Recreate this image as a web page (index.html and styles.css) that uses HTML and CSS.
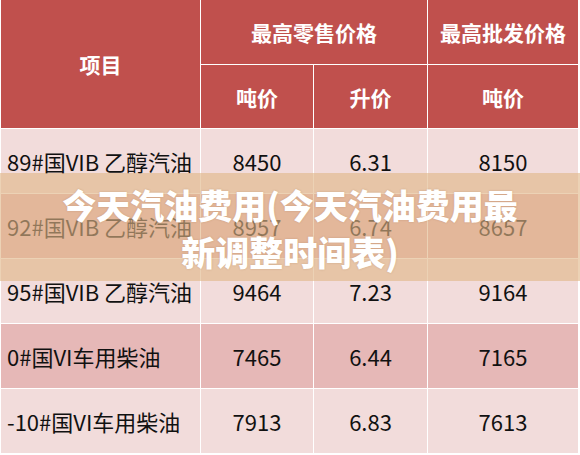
FILE: index.html
```html
<!DOCTYPE html>
<html lang="zh-CN">
<head>
<meta charset="utf-8">
<title>今天汽油费用</title>
<link rel="stylesheet" href="styles.css">
</head>
<body>
<div class="page">
  <div class="grid">
    <div class="hd span-rows">项目</div>
    <div class="hd span-cols">最高零售价格</div>
    <div class="hd span-rows-last">最高批发价格</div>
    <div class="hd">吨价</div>
    <div class="hd">升价</div>
    <div class="hd">吨价</div>

    <div class="cell name light">89#国VIB 乙醇汽油</div>
    <div class="cell light">8450</div>
    <div class="cell light">6.31</div>
    <div class="cell light">8150</div>

    <div class="cell name dark">92#国VIB 乙醇汽油</div>
    <div class="cell dark">8957</div>
    <div class="cell dark">6.74</div>
    <div class="cell dark">8657</div>

    <div class="cell name light">95#国VIB 乙醇汽油</div>
    <div class="cell light">9464</div>
    <div class="cell light">7.23</div>
    <div class="cell light">9164</div>

    <div class="cell name dark">0#国VI车用柴油</div>
    <div class="cell dark">7465</div>
    <div class="cell dark">6.44</div>
    <div class="cell dark">7165</div>

    <div class="cell name light">-10#国VI车用柴油</div>
    <div class="cell light">7913</div>
    <div class="cell light">6.83</div>
    <div class="cell light">7613</div>
  </div>
  <div class="banner">今天汽油费用(今天汽油费用最<br>新调整时间表)</div>
</div>
</body>
</html>
```

FILE: styles.css
```css
html, body {
  margin: 0;
  padding: 0;
  background: #ffffff;
}
body {
  width: 580px;
  height: 455px;
  overflow: hidden;
  font-family: "Noto Sans CJK SC", "Microsoft YaHei", sans-serif;
}
.page {
  position: relative;
  width: 580px;
  height: 455px;
}
.grid {
  display: grid;
  grid-template-columns: 199px 112px 113px 150px;
  grid-template-rows: 64px 63px repeat(5, 64px);
  gap: 1px;
  padding-left: 1px;
  background: #ffffff;
  width: 577px;
}
.hd {
  background: #c0504d;
  color: #ffffff;
  font-weight: bold;
  font-size: 21px;
  display: flex;
  align-items: center;
  justify-content: center;
}
.span-rows {
  grid-row: 1 / span 2;
}
.span-cols {
  grid-column: 2 / span 2;
}
.span-rows-last {
  grid-column: 4;
  grid-row: 1;
}
.cell {
  font-size: 22px;
  color: #111111;
  display: flex;
  align-items: center;
  justify-content: center;
}
.cell.name {
  justify-content: flex-start;
  padding-left: 6px;
}
.light {
  background: #f2dcdb;
}
.dark {
  background: #e6b8b7;
}
.banner {
  position: absolute;
  left: 0;
  top: 173px;
  width: 580px;
  height: 108px;
  box-sizing: border-box;
  padding-top: 8px;
  background: rgba(224, 182, 136, 0.62);
  color: #ffffff;
  font-weight: 900;
  font-size: 34px;
  line-height: 47px;
  text-align: center;
  text-shadow: 0 0 2px rgba(120, 70, 30, 0.25);
}
```
